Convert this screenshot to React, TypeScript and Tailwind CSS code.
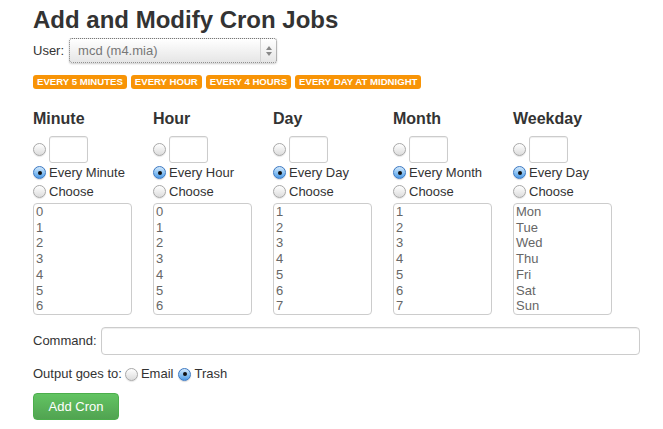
import React from 'react'

const font = { fontFamily: '"Liberation Sans", Arial, sans-serif' }

function Radio({ checked = false }: { checked?: boolean }) {
  return checked ? (
    <span className="flex h-[13px] w-[13px] shrink-0 items-center justify-center rounded-full border border-[#3d79c2] bg-gradient-to-b from-[#d3e8fb] via-[#8ec4f3] to-[#4f9be6] shadow-[0_1px_1px_rgba(0,0,0,0.15)]">
      <span className="h-[4px] w-[4px] rounded-full bg-[#111]" />
    </span>
  ) : (
    <span className="block h-[13px] w-[13px] shrink-0 rounded-full border border-[#a8a8a8] bg-gradient-to-b from-[#ffffff] to-[#dcdcdc] shadow-[0_1px_1px_rgba(0,0,0,0.1)]" />
  )
}

const columns = [
  { title: 'Minute', every: 'Every Minute', items: ['0', '1', '2', '3', '4', '5', '6'] },
  { title: 'Hour', every: 'Every Hour', items: ['0', '1', '2', '3', '4', '5', '6'] },
  { title: 'Day', every: 'Every Day', items: ['1', '2', '3', '4', '5', '6', '7'] },
  { title: 'Month', every: 'Every Month', items: ['1', '2', '3', '4', '5', '6', '7'] },
  { title: 'Weekday', every: 'Every Day', items: ['Mon', 'Tue', 'Wed', 'Thu', 'Fri', 'Sat', 'Sun'] },
]

const presets = ['Every 5 minutes', 'Every hour', 'Every 4 hours', 'Every day at midnight']

export default function App() {
  return (
    <div className="min-h-[429px] bg-white px-[33px] pt-[6px] text-[#333]" style={font}>
      {/* Title */}
      <h1 className="text-[24px] font-bold leading-[28px] text-[#333]">Add and Modify Cron Jobs</h1>

      {/* User select */}
      <div className="mt-[4px] flex items-center gap-[5px] text-[13px]">
        <span>User:</span>
        <div className="flex h-[25px] w-[208px] items-center rounded-[3px] border border-dotted border-[#777] bg-gradient-to-b from-[#ffffff] to-[#e6e6e6] shadow-[0_1px_2px_rgba(0,0,0,0.2)]">
          <span className="flex-1 pl-[8px] text-[#777]">mcd (m4.mia)</span>
          <div className="flex h-full w-[16px] flex-col items-center justify-center gap-[2px] border-l border-[#d4d4d4]">
            <span className="h-0 w-0 border-x-[3px] border-b-[4px] border-x-transparent border-b-[#888]" />
            <span className="h-0 w-0 border-x-[3px] border-t-[4px] border-x-transparent border-t-[#888]" />
          </div>
        </div>
      </div>

      {/* Presets */}
      <div className="mt-[12px] flex gap-[4px]">
        {presets.map((p) => (
          <span key={p} className="rounded-[3px] bg-[#f89406] px-[4px] text-[9.6px] font-bold uppercase leading-[14px] text-white">
            {p}
          </span>
        ))}
      </div>

      {/* Columns */}
      <div className="mt-[20px] flex">
        {columns.map((c) => (
          <div key={c.title} className="w-[120px] shrink-0">
            <h3 className="text-[16px] font-bold leading-[20px]">{c.title}</h3>
            <div className="mt-[7px] flex items-center gap-[3px]">
              <Radio />
              <div className="h-[27px] w-[39px] rounded-[3px] border border-[#ccc] bg-white shadow-[inset_0_1px_1px_rgba(0,0,0,0.07)]" />
            </div>
            <div className="flex h-[19px] items-center gap-[3px] text-[13px]">
              <Radio checked />
              <span>{c.every}</span>
            </div>
            <div className="flex h-[19px] items-center gap-[3px] text-[13px]">
              <Radio />
              <span>Choose</span>
            </div>
            <div className="mt-[2px] h-[112px] w-[99px] overflow-hidden rounded-[4px] border border-[#ccc] bg-white">
              {c.items.map((it) => (
                <div key={it} className="pl-[2px] text-[13px] leading-[15.7px] text-[#666]">
                  {it}
                </div>
              ))}
            </div>
          </div>
        ))}
      </div>

      {/* Command */}
      <div className="mt-[12px] flex items-center gap-[4px] text-[13px]">
        <span>Command:</span>
        <div className="h-[28px] w-[539px] shrink-0 rounded-[4px] border border-[#ccc] bg-white shadow-[inset_0_1px_1px_rgba(0,0,0,0.07)]" />
      </div>

      {/* Output */}
      <div className="mt-[9px] flex h-[20px] items-center gap-[3px] text-[13px]">
        <span>Output goes to:</span>
        <Radio />
        <span>Email</span>
        <span className="ml-[2px] flex"><Radio checked /></span>
        <span>Trash</span>
      </div>

      {/* Submit */}
      <button className="mt-[9px] flex h-[27px] w-[86px] items-center justify-center rounded-[4px] border border-[#4cae4c] bg-gradient-to-b from-[#62c462] to-[#51a351] text-[13px] text-white">
        Add Cron
      </button>
    </div>
  )
}
